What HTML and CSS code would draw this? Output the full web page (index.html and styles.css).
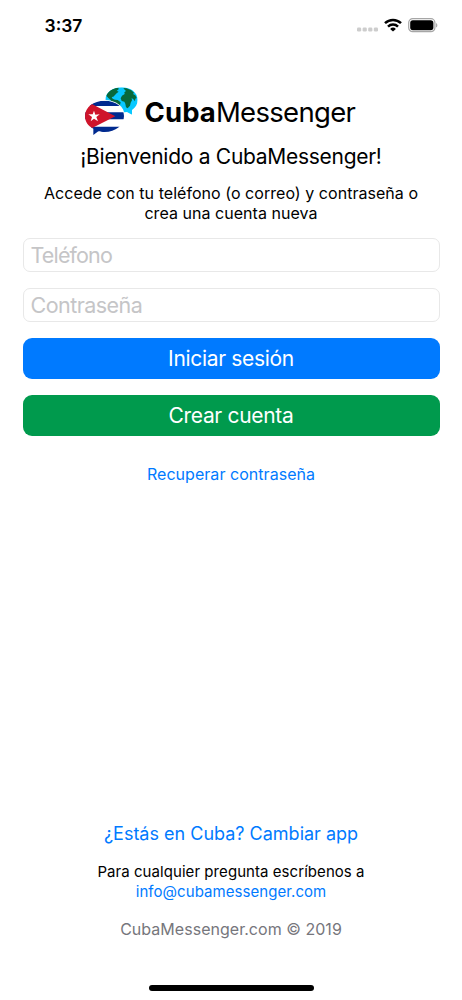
FILE: index.html
```html
<!DOCTYPE html>
<html lang="es">
<head>
<meta charset="utf-8">
<title>CubaMessenger</title>
<link rel="stylesheet" href="styles.css">
</head>
<body>
<div class="screen">
  <header class="status">
    <span class="time">3:37</span>
    <div class="status-icons">
      <svg class="dots" viewBox="0 0 22 5"><g fill="#cdcdcd"><rect x="0" y="0.5" width="4.2" height="4" rx="1.3"/><rect x="5.6" y="0.5" width="4.2" height="4" rx="1.3"/><rect x="11.2" y="0.5" width="4.2" height="4" rx="1.3"/><rect x="16.8" y="0.5" width="4.2" height="4" rx="1.3"/></g></svg>
      <svg class="wifi" viewBox="0 0 18 14"><g fill="none" stroke="#000" stroke-width="2.5"><path d="M1 5.2a11.6 11.6 0 0 1 16 0"/><path d="M4 8.6a7.2 7.2 0 0 1 10 0"/></g><path d="M9 13.5 6.1 10.9a4.2 4.2 0 0 1 5.8 0z"/></svg>
      <svg class="battery" viewBox="0 0 30 15"><rect x=".7" y=".7" width="26.2" height="13" rx="4" fill="#fff" stroke="#a6a6a6" stroke-width="1.2"/><rect x="2.2" y="2.2" width="23.2" height="10" rx="2.7"/><path d="M28.1 5v4.6c1.7-.8 1.7-3.8 0-4.6z" fill="#a6a6a6"/></svg>
    </div>
  </header>
  <main>
    <div class="brand">
      <svg class="logo" viewBox="24 18 165 150">
        <defs>
          <clipPath id="globe"><path d="M137 22c27 0 48 16 48 38 0 13-7 23-17 30v14l-15-8c-37 6-65-11-65-36 0-22 22-38 49-38z"/></clipPath>
          <clipPath id="flag"><path d="M86 62c33 0 58 19 58 46s-25 48-58 48c-7 0-13 0-19-2l-15 11v-19c-16-8-25-21-25-38 0-27 26-46 59-46z"/></clipPath>
        </defs>
        <g clip-path="url(#globe)">
          <path fill="#08c8ff" d="M80 15h110v92H80z"/>
          <path fill="#08693b" d="M94 39l9-8 14-7 11-1-1 6-5 3 6 3-6 5-5 5-5 5-5 1 3 5 7 3 8 1 9 7-2 8-7 6-5 8-5-4-1-9-7-8-3-8-7-6-6-7zM142 24l10 1 14 6 8 7-3 4 7 4 4 8-4 2-1 8-5-6-5-4 1 7-4 7-2 9-7 8-5-3-2-11-3-6-8-2-3-8 4-8 8-5-1-5 5-4-4-4z"/>
        </g>
        <path fill="#fff" d="M86 60c34 0 60 20 60 48 0 9-2 17-7 24H48V80c8-13 22-20 38-20z"/>
        <g clip-path="url(#flag)">
          <path fill="#fff" d="M20 60h130v108H20z"/>
          <path fill="#002a8f" d="M20 60h130v18H20zM20 97h130v21H20zM20 140h130v28H20z"/>
          <path fill="#cf142b" d="M20 58 52 74l66 35-68 34-29 5z"/>
        </g>
        <path fill="#fff" d="m54 92 4 12 13-1-10 8 5 13-12-8-10 8 4-13-11-8h13z"/>
      </svg>
      <h1 class="brand-name"><b>Cuba</b>Messenger</h1>
    </div>
    <h2 class="welcome">¡Bienvenido a CubaMessenger!</h2>
    <p class="intro">Accede con tu teléfono (o correo) y contraseña o<br>crea una cuenta nueva</p>
    <form class="form">
      <div class="field phone">Teléfono</div>
      <div class="field password">Contraseña</div>
      <div class="button login">Iniciar sesión</div>
      <div class="button signup">Crear cuenta</div>
    </form>
    <a class="recover">Recuperar contraseña</a>
  </main>
  <footer>
    <a class="switch">¿Estás en Cuba? Cambiar app</a>
    <p class="help">Para cualquier pregunta escríbenos a<br><a>info@cubamessenger.com</a></p>
    <p class="copy">CubaMessenger.com © 2019</p>
    <div class="home"></div>
  </footer>
</div>
</body>
</html>
```
FILE: styles.css
```css
* { box-sizing: border-box; }
body { margin: 0; background: #fff; color: #000; font-family: Inter, "Liberation Sans", sans-serif; }
h1, h2, p { margin: 0; font-weight: 400; }
a { color: #007aff; text-decoration: none; }
.screen { width: 462px; height: 1000px; display: flex; flex-direction: column; overflow: hidden; }
.status { height: 86px; padding: 15px 24px 0 44.5px; display: flex; justify-content: space-between; align-items: flex-start; }
.time { font-size: 17.5px; line-height: 22px; font-weight: 600; }
.status-icons { display: flex; align-items: flex-start; }
.dots { width: 22px; height: 5px; margin: 12px 5px 0 0; }
.wifi { width: 18px; height: 14px; margin: 3px 6px 0 0; }
.battery { width: 30px; height: 15px; margin-top: 3px; }
main { flex: 1; display: flex; flex-direction: column; padding: 0 22.5px; text-align: center; }
.brand { display: flex; height: 50px; padding-left: 61.5px; gap: 5.5px; align-items: center; }
.logo { width: 55px; height: 50px; }
.brand-name { font-size: 27.5px; line-height: 34px; white-space: nowrap; letter-spacing: -0.68px; padding-top: 1px; }
.brand-name b { font-weight: 700; letter-spacing: 0.1px; }
.welcome { font-size: 21px; line-height: 26px; margin-top: 8px; letter-spacing: -0.28px; }
.intro { font-size: 16px; line-height: 20px; margin-top: 13px; letter-spacing: 0.04px; }
.form { margin-top: 15px; }
.field { height: 34px; margin-bottom: 16px; padding: 0 7px; border: 1px solid #e8e8e8; border-radius: 7px; font-size: 21.5px; line-height: 33px; text-align: left; color: #c5c5c7; }
.phone { letter-spacing: -0.85px; }
.password { letter-spacing: -0.55px; }
.button { height: 40.5px; border-radius: 9px; color: #fff; font-size: 21px; line-height: 41px; margin-bottom: 16.5px; letter-spacing: -0.32px; }
.login { background: #007aff; }
.signup { background: #009a4d; }
.recover { font-size: 16px; line-height: 20px; margin-top: 12px; letter-spacing: 0.04px; }
footer { height: 179px; display: flex; flex-direction: column; align-items: center; text-align: center; }
.switch { font-size: 18px; line-height: 26px; }
.help { font-size: 15px; line-height: 20px; margin-top: 15px; letter-spacing: 0.06px; }
.copy { font-size: 16px; line-height: 20px; margin-top: 17px; letter-spacing: 0.03px; color: #76767c; }
.home { width: 165px; height: 6px; border-radius: 3px; background: #000; margin-top: 46px; }
```
